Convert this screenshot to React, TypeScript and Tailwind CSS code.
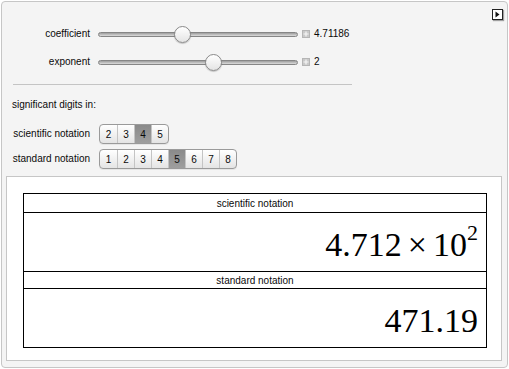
import React from "react";

const sans = { fontFamily: '"Liberation Sans", Arial, sans-serif' };
const serif = { fontFamily: '"Liberation Serif", "Times New Roman", serif' };

function Slider({ label, thumb, value }: { label: string; thumb: number; value: string }) {
  return (
    <div className="flex items-center h-[18px]">
      <div className="w-[88px] text-right text-[10px] leading-[12px] text-[#0a0a0a]">{label}</div>
      <div className="relative ml-[8px] w-[200px] h-[5px] rounded-full border border-[#858585] bg-gradient-to-b from-[#9d9d9d] to-[#dcdcdc]">
        <div
          className="absolute top-[-7px] w-[17px] h-[17px] rounded-full border border-[#8a8a8a] bg-gradient-to-b from-white to-[#e4e4e4] shadow-[0_1px_1px_rgba(0,0,0,0.2)]"
          style={{ left: thumb }}
        />
      </div>
      <div className="ml-[4px] w-[8px] h-[8px] bg-[#c9c9c9] border border-[#b5b5b5] flex items-center justify-center">
        <svg width="6" height="6" viewBox="0 0 6 6">
          <path d="M3 0.5V5.5M0.5 3H5.5" stroke="#f6f6f6" strokeWidth="1.2" />
        </svg>
      </div>
      <div className="ml-[4px] text-[10px] leading-[12px] text-[#0a0a0a]">{value}</div>
    </div>
  );
}

function Setter({ items, selected }: { items: string[]; selected: string }) {
  return (
    <div className="flex h-[20px] rounded-[4px] border border-[#9a9a9a] bg-gradient-to-b from-white to-[#e4e4e4] overflow-hidden shadow-[0_1px_0_rgba(0,0,0,0.06)]">
      {items.map((it, i) => (
        <div
          key={it}
          className={
            (i > 0 ? "border-l border-[#c4c4c4] " : "") +
            (it === selected ? "bg-gradient-to-b from-[#8a8a8a] to-[#9e9e9e] " : "") +
            "w-[17px] flex items-center justify-center text-[10px] text-[#0a0a0a]"
          }
        >
          {it}
        </div>
      ))}
    </div>
  );
}

export default function App() {
  return (
    <div className="w-[509px] h-[369px] bg-white p-px" style={sans}>
      <div className="relative w-[507px] h-[367px] rounded-[4px] border border-[#c6c6c6] bg-[#f4f4f4] flex flex-col">
        <div className="absolute top-[7px] right-[4px] w-[11px] h-[11px] border border-[#222] bg-white flex items-center justify-center shadow-[1px_1px_1px_rgba(0,0,0,0.35)]">
          <svg width="5" height="7" viewBox="0 0 5 7">
            <path d="M0.5 0.5L4.5 3.5L0.5 6.5Z" fill="#111" />
          </svg>
        </div>

        <div className="mt-[23px]">
          <Slider label="coefficient" thumb={75} value="4.71186" />
        </div>
        <div className="mt-[10px]">
          <Slider label="exponent" thumb={106} value="2" />
        </div>

        <div className="mt-[13px] ml-[11px] w-[339px] h-px bg-[#c4c4c4]" />

        <div className="mt-[14px] ml-[10px] text-[10px] leading-[12px] text-[#0a0a0a]">significant digits in:</div>

        <div className="mt-[13px] flex items-center">
          <div className="w-[88px] text-right text-[10px] leading-[12px] text-[#0a0a0a]">scientific notation</div>
          <div className="ml-[9px]">
            <Setter items={["2", "3", "4", "5"]} selected="4" />
          </div>
        </div>
        <div className="mt-[5px] flex items-center">
          <div className="w-[88px] text-right text-[10px] leading-[12px] text-[#0a0a0a]">standard notation</div>
          <div className="ml-[9px]">
            <Setter items={["1", "2", "3", "4", "5", "6", "7", "8"]} selected="5" />
          </div>
        </div>

        <div className="mt-[7px] ml-[4px] w-[496px] h-[185px] border border-[#c6c6c6] bg-white pt-[16px] pl-[16px]">
          <div className="w-[464px] border border-black flex flex-col">
            <div className="h-[19px] border-b border-black flex items-center justify-center text-[10px] text-[#0a0a0a]">
              scientific notation
            </div>
            <div
              className="h-[59px] border-b border-black flex items-center justify-end pr-[8px] pt-[6px] text-[34px] leading-[34px] text-black"
              style={serif}
            >
              <span>4.712</span>
              <span className="mx-[6px]">×</span>
              <span>10</span>
              <span className="relative -top-[12px] text-[22px] leading-[22px]">2</span>
            </div>
            <div className="h-[17px] border-b border-black flex items-center justify-center text-[10px] text-[#0a0a0a]">
              standard notation
            </div>
            <div
              className="h-[58px] flex items-center justify-end pr-[8px] pt-[6px] text-[34px] leading-[34px] text-black"
              style={serif}
            >
              471.19
            </div>
          </div>
        </div>
      </div>
    </div>
  );
}
